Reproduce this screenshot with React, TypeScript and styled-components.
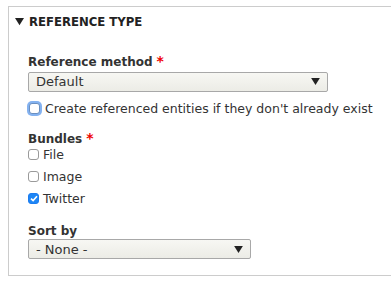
import * as React from 'react';
import styled, {createGlobalStyle} from 'styled-components';

const Global = createGlobalStyle`
  html, body {
    margin: 0;
    padding: 0;
    background: #fff;
    overflow: hidden;
  }
  body {
    font-family: "DejaVu Sans", "Noto Sans", sans-serif;
    color: #333;
  }
`;

const Fieldset = styled.section`
  margin: 6px 0 0 8px;
  border: 1px solid #ccc;
  border-right: none;
  box-sizing: border-box;
`;

const Legend = styled.div`
  display: flex;
  align-items: center;
  height: 30px;
  padding-left: 6px;
  gap: 5px;
  font-size: 11.7px;
  font-weight: bold;
  text-transform: uppercase;
  color: #222;
`;

const Body = styled.div`
  padding: 0 19px 16px;
  display: flex;
  flex-direction: column;
  align-items: flex-start;
`;

const Label = styled.div<{$top: number; $lh?: number}>`
  margin-top: ${p => p.$top}px;
  line-height: ${p => p.$lh || 16}px;
  font-size: 12px;
  font-weight: bold;
  color: #333;
`;

const Req = styled.span`
  color: #e00;
  margin-left: 4px;
  font-size: 14px;
`;

const SelectWrap = styled.div<{$w: number; $top?: number}>`
  position: relative;
  width: ${p => p.$w}px;
  margin-top: ${p => p.$top || 0}px;
`;

const Select = styled.select`
  appearance: none;
  width: 100%;
  height: 20px;
  box-sizing: border-box;
  border: 1px solid #a8a8a8;
  border-radius: 2px;
  background: linear-gradient(#f7f7f3, #ecece6);
  font-family: "DejaVu Sans", sans-serif;
  font-size: 13px;
  color: #333;
  padding: 0 7px;
  margin: 0;
  outline: none;
`;

const Arrow = styled.svg`
  position: absolute;
  right: 8px;
  top: 7px;
  pointer-events: none;
`;

const CheckRow = styled.label<{$top?: number}>`
  display: flex;
  align-items: center;
  height: 18px;
  margin-top: ${p => p.$top || 0}px;
  font-size: 12.5px;
  white-space: nowrap;
  color: #333;
  gap: 3px;
`;

const Box = styled.span<{$checked?: boolean; $focus?: boolean}>`
  flex: none;
  width: 11px;
  height: 11px;
  box-sizing: border-box;
  border-radius: 3px;
  border: 1px solid ${p => (p.$checked ? '#1c7cf0' : p.$focus ? '#6a8fc0' : '#9a9a9a')};
  background: ${p => (p.$checked ? '#1e86f5' : '#fff')};
  box-shadow: ${p => (p.$focus ? '0 0 0 2px #84b2f0' : 'none')};
  margin: ${p => (p.$focus ? '0 2px 0 1px' : '0 1px 0 0')};
  display: flex;
  align-items: center;
  justify-content: center;
`;

const TriangleDown = ({size = 8}: {size?: number}) => (
  <svg width={size} height={size * 0.8} viewBox="0 0 10 8">
    <path d="M0 0 L10 0 L5 8 Z" fill="#222" />
  </svg>
);

const Dropdown = ({value, width, top}: {value: string; width: number; top?: number}) => (
  <SelectWrap $w={width} $top={top}>
    <Select value={value} onChange={() => {}}>
      <option>{value}</option>
    </Select>
    <Arrow width="9" height="7" viewBox="0 0 10 8">
      <path d="M0 0 L10 0 L5 8 Z" fill="#222" />
    </Arrow>
  </SelectWrap>
);

const Check = ({label, checked, focus, top}: {label: string; checked?: boolean; focus?: boolean; top?: number}) => (
  <CheckRow $top={top}>
    <Box $checked={checked} $focus={focus}>
      {checked && (
        <svg width="8" height="7" viewBox="0 0 8 7">
          <path d="M1 3.6 L3.1 5.6 L7 1.2" stroke="#fff" strokeWidth="1.6" fill="none" />
        </svg>
      )}
    </Box>
    {label}
  </CheckRow>
);

export default function App() {
  return (
    <>
      <Global />
      <Fieldset>
        <Legend>
          <TriangleDown size={9} />
          Reference type
        </Legend>
        <Body>
          <Label $top={16}>
            Reference method<Req>*</Req>
          </Label>
          <Dropdown value="Default" width={300} top={1} />
          <Check label="Create referenced entities if they don't already exist" focus top={8} />
          <Label $top={13} $lh={14}>
            Bundles<Req>*</Req>
          </Label>
          <Check label="File" />
          <Check label="Image" top={4} />
          <Check label="Twitter" checked top={4} />
          <Label $top={15}>Sort by</Label>
          <Dropdown value="- None -" width={223} />
        </Body>
      </Fieldset>
    </>
  );
}
